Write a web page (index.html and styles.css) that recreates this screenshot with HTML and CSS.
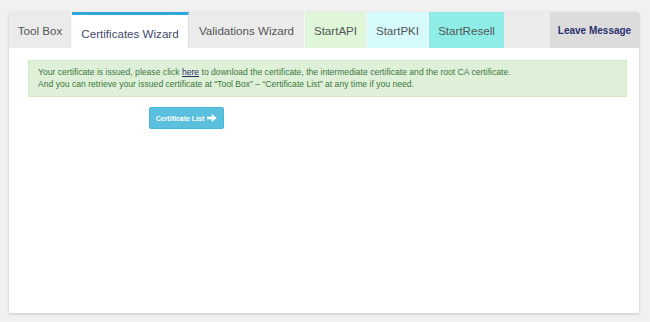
FILE: index.html
```html
<!DOCTYPE html>
<html>
<head>
<meta charset="utf-8">
<link rel="stylesheet" href="styles.css">
</head>
<body>
<div class="panel">
  <div class="tabs">
    <div class="tab toolbox">Tool Box</div>
    <div class="tab active">Certificates Wizard</div>
    <div class="tab valid">Validations Wizard</div>
    <div class="tab api">StartAPI</div>
    <div class="tab pki">StartPKI</div>
    <div class="tab resell">StartResell</div>
    <div class="spacer"></div>
    <div class="tab leave">Leave Message</div>
  </div>
  <div class="content">
    <div class="alert">
      Your certificate is issued, please click <a href="#">here</a> to download the certificate, the intermediate certificate and the root CA certificate.<br>
      And you can retrieve your issued certificate at “Tool Box” – “Certificate List” at any time if you need.
    </div>
    <div class="actions">
      <button class="btn">Certificate List <svg class="arrow" width="10" height="8" viewBox="0 0 11 9"><path d="M0 3h5V0l6 4.5L5 9V6H0z" fill="#fff"/></svg></button>
    </div>
  </div>
</div>
</body>
</html>
```
FILE: styles.css
```css
html, body {
  margin: 0;
  padding: 0;
  background: #f1f1f1;
  font-family: "Liberation Sans", Arial, sans-serif;
}
body {
  padding: 12px 11px 9px 9px;
}
.panel {
  background: #fff;
  height: 301px;
  box-shadow: 0 1px 3px rgba(0,0,0,0.18);
  display: flex;
  flex-direction: column;
}
.tabs {
  display: flex;
  height: 36px;
  background: #ebebeb;
}
.tab {
  display: flex;
  align-items: center;
  justify-content: center;
  box-sizing: border-box;
  font-size: 11.6px;
  color: #555;
  border-right: 1px solid #f6f6f6;
  white-space: nowrap;
}
.tab.toolbox { width: 63px; }
.tab.active {
  width: 117px;
  background: #fff;
  border-top: 3px solid #2ea7dc;
  padding-top: 4px;
  color: #3f4a6e;
  border-right: 1px solid #ddd;
}
.tab.valid { width: 116px; }
.tab.api { width: 62px; background: #dff7d8; }
.tab.pki { width: 62px; background: #d6fbfd; }
.tab.resell { width: 75px; background: #8eede6; border-right: none; }
.spacer { flex: 1; }
.tab.leave {
  width: 89px;
  background: #dcdcdc;
  color: #2b3170;
  font-weight: bold;
  font-size: 10px;
  border-right: none;
}
.content {
  padding: 12px 12px 0 19px;
}
.alert {
  background: #dff0d8;
  color: #3c763d;
  font-size: 8.6px;
  line-height: 12px;
  padding: 5px 9px 6px;
  border: 1px solid #d6e9c6;
}
.alert a {
  color: #2a2d6b;
  text-decoration: underline;
}
.actions {
  padding: 10px 0 0 121px;
}
.btn {
  background: #5bc0de;
  border: 1px solid #46b8da;
  border-radius: 2px;
  color: #fff;
  font-family: "Liberation Sans", Arial, sans-serif;
  font-weight: bold;
  font-size: 7px;
  height: 22px;
  width: 75px;
  padding: 0;
  display: flex;
  align-items: center;
  justify-content: center;
  gap: 3px;
}
.arrow { display: block; }
```
